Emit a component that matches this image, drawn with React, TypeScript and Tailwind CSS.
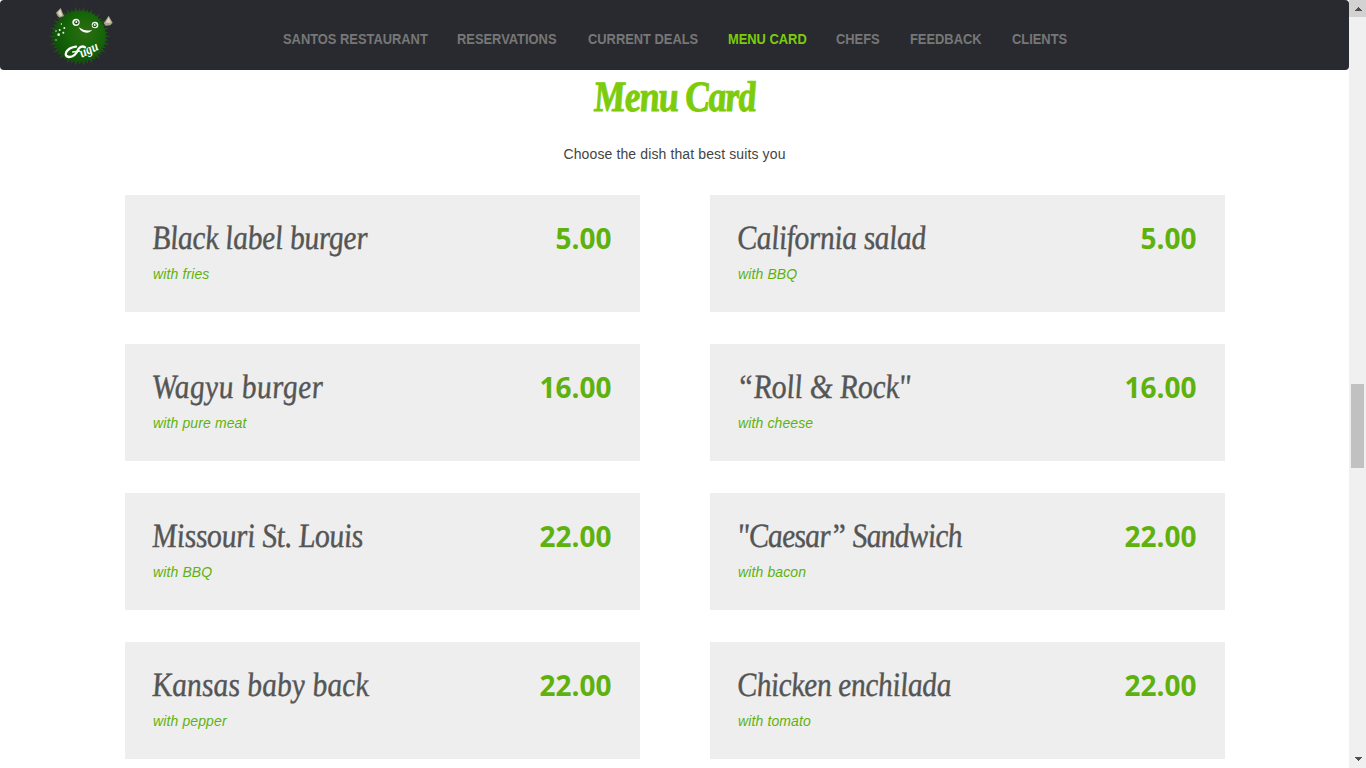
import React from "react";

const nav = [
  { label: "SANTOS RESTAURANT", width: "w-[144px]" },
  { label: "RESERVATIONS", width: "w-[101px]" },
  { label: "CURRENT DEALS", width: "w-[110px]" },
  { label: "MENU CARD", width: "w-[78px]", active: true },
  { label: "CHEFS", width: "w-[44px]" },
  { label: "FEEDBACK", width: "w-[71px]" },
  { label: "CLIENTS", width: "w-[56px]" },
];

const dishes = [
  { name: "Black label burger", tracking: "tracking-[-0.5px]", note: "with fries", price: "5.00" },
  { name: "California salad", tracking: "tracking-[-0.6px]", note: "with BBQ", price: "5.00" },
  { name: "Wagyu burger", tracking: "tracking-[0.3px]", note: "with pure meat", price: "16.00" },
  { name: "“Roll & Rock\"", tracking: "tracking-[-0.3px]", note: "with cheese", price: "16.00" },
  { name: "Missouri St. Louis", tracking: "tracking-[-0.5px]", note: "with BBQ", price: "22.00" },
  { name: "\"Caesar” Sandwich", tracking: "tracking-[-1px]", note: "with bacon", price: "22.00" },
  { name: "Kansas baby back", tracking: "tracking-[-0.1px]", note: "with pepper", price: "22.00" },
  { name: "Chicken enchilada", tracking: "tracking-[-0.65px]", note: "with tomato", price: "22.00" },
];

const spikes = Array.from({ length: 88 }, (_, i) => {
  const a = (i / 88) * Math.PI * 2;
  const r = i % 2 ? 74 : i % 4 ? 88 : 93;
  return `${(119 + r * Math.cos(a)).toFixed(1)},${(109 + r * 0.97 * Math.sin(a)).toFixed(1)}`;
}).join(" ");

function Logo() {
  return (
    <svg width="66" height="64" viewBox="27 9 198 192" className="shrink-0">
      <defs>
        <radialGradient id="body" cx="60%" cy="42%" r="62%">
          <stop offset="0" stopColor="#2f6d0f" />
          <stop offset="0.5" stopColor="#18670a" />
          <stop offset="1" stopColor="#0d5207" />
        </radialGradient>
      </defs>
      <polygon points={spikes} fill="#1d5216" />
      <ellipse cx="119" cy="109" rx="78" ry="77" fill="url(#body)" />
      <path d="M48 38 L62 24 L72 48 L59 53 Q51 48 48 38Z" fill="#a8a28a" />
      <path d="M53 38 L61 28 L67 46 L60 49Z" fill="#ddd8c4" />
      <path d="M191 70 L206 47 L218 68 L211 76 L197 77Z" fill="#a8a28a" />
      <path d="M197 68 L206 52 L213 68Z" fill="#ddd8c4" />
      <circle cx="108" cy="67" r="11" fill="#f4f8ed" />
      <circle cx="109" cy="67" r="6.5" fill="#17500a" />
      <circle cx="109" cy="66" r="3" fill="#fff" />
      <circle cx="165" cy="75" r="10" fill="#f4f8ed" />
      <circle cx="164" cy="76" r="6" fill="#17500a" />
      <circle cx="164" cy="75" r="3" fill="#fff" />
      <path d="M116 82 Q138 97 156 89 Q152 97 140 98 Q124 98 116 82Z" fill="#fff" />
      <g fill="#e8f3e4">
        <circle cx="64" cy="72" r="2.2" />
        <circle cx="73" cy="84" r="3" />
        <circle cx="59" cy="90" r="3" />
        <circle cx="70" cy="98" r="3" />
        <circle cx="48" cy="93" r="2.3" />
        <circle cx="56" cy="104" r="4" />
        <circle cx="48" cy="120" r="2" />
      </g>
      <path d="M135 142 Q124 135 116 146 Q106 171 87 171 Q73 169 79 156 Q88 142 108 140" fill="none" stroke="#fff" strokeWidth="7" strokeLinecap="round" strokeLinejoin="round" />
      <path d="M98 156 L119 153" stroke="#fff" strokeWidth="4" strokeLinecap="round" />
      <text x="125" y="173" transform="rotate(-25 125 173)" fill="#fff" fontFamily="Liberation Serif, serif" fontStyle="italic" fontWeight="bold" fontSize="42" textLength="58" lengthAdjust="spacingAndGlyphs">ugu</text>
    </svg>
  );
}

export default function App() {
  return (
    <div className="flex h-screen w-full overflow-hidden bg-white font-['Liberation_Sans',Arial,sans-serif]">
      <div className="flex min-w-0 flex-1 flex-col">
        <header className="flex h-[70px] shrink-0 items-start rounded bg-[#292a2f] pl-[49px]">
          <div className="w-[233.5px] pt-[3px]"><Logo /></div>
          <nav className="flex gap-[30.2px] pt-[31px] text-[14px] leading-4 font-bold">
            {nav.map((n) => (
              <a key={n.label} className={`${n.width} whitespace-nowrap ${n.active ? "text-[#7dcc0c]" : "text-[#777777]"}`}>
                <span className="inline-block origin-left scale-x-[0.92]">{n.label}</span>
              </a>
            ))}
          </nav>
        </header>
        <main className="flex flex-col items-center">
          <h1 className="mt-[3px] h-12 scale-x-[0.84] skew-x-[5deg] font-['Liberation_Serif',serif] text-[43px] leading-[48px] font-bold tracking-[-1.3px] whitespace-nowrap text-[#7dcc0c] italic [-webkit-text-stroke:1px_#7dcc0c]">Menu Card</h1>
          <p className="mt-[23px] text-sm leading-5 tracking-[0.12px] text-[#444444]">Choose the dish that best suits you</p>
          <div className="mt-[31px] grid w-[1100px] grid-cols-2 gap-x-[70px] gap-y-8">
            {dishes.map((d) => (
              <article key={d.name} className="flex h-[117px] items-start justify-between bg-[#eeeeee] px-7 pt-[23px]">
                <div>
                  <h2 className={`-ml-px h-10 w-fit origin-left scale-x-[0.88] skew-x-[5deg] font-['Liberation_Serif',serif] text-[34px] leading-10 whitespace-nowrap text-[#555555] italic [-webkit-text-stroke:0.4px_#555555] ${d.tracking}`}>{d.name}</h2>
                  <p className="mt-[6px] pl-[0.5px] text-sm leading-5 tracking-[0.12px] text-[#5fb20e] italic">{d.note}</p>
                </div>
                <span className="font-['Open_Sans',sans-serif] text-[28px] leading-10 font-bold text-[#5fb20e]">{d.price}</span>
              </article>
            ))}
          </div>
        </main>
      </div>
      <div className="flex w-[17px] shrink-0 flex-col items-center bg-[#f0f0f0]">
        <div className="flex h-[17px] w-full items-center justify-center bg-[#d2d2d2]">
          <svg width="8" height="4" shapeRendering="crispEdges"><path d="M0 4 L4 0 L8 4Z" fill="#505050" /></svg>
        </div>
        <div className="mt-[367px] h-[84px] w-[13px] bg-[#c1c1c1]" />
        <div className="mt-auto flex h-[18px] items-center">
          <svg width="8" height="4" shapeRendering="crispEdges"><path d="M0 0 L4 4 L8 0Z" fill="#505050" /></svg>
        </div>
      </div>
    </div>
  );
}
